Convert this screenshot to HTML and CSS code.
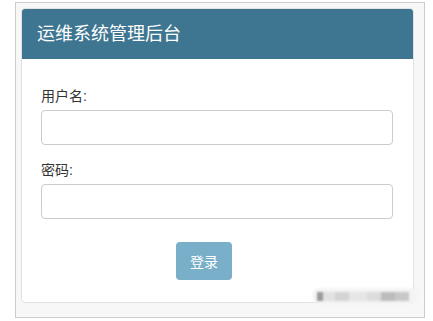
FILE: index.html
```html
<!DOCTYPE html>
<html lang="zh">
<head>
<meta charset="utf-8">
<title>运维系统管理后台</title>
<link rel="stylesheet" href="styles.css">
</head>
<body>
<div class="frame">
  <div class="card">
    <div class="card-header">运维系统管理后台</div>
    <form class="card-body">
      <label class="field-label" for="u">用户名:</label>
      <input class="field-input" id="u" type="text">
      <label class="field-label second" for="p">密码:</label>
      <input class="field-input" id="p" type="password">
      <div class="actions"><button type="button" class="btn">登录</button></div>
    </form>
  </div>
  <div class="watermark">
    <span class="wm-dot"></span><span class="wm-block b1"></span><span class="wm-block b2"></span><span class="wm-block b3"></span><span class="wm-block b4"></span><span class="wm-block b5"></span><span class="wm-block b6"></span>
  </div>
</div>
</body>
</html>
```
FILE: styles.css
```css
html, body {
  margin: 0;
  padding: 0;
  background: #ffffff;
  font-family: "Liberation Sans", "Noto Sans CJK SC", sans-serif;
}
.frame {
  position: relative;
  box-sizing: border-box;
  margin: 2px 0 0 15px;
  width: 410px;
  height: 316px;
  border: 1px solid #cccccc;
  background: #f7f7f7;
  padding: 5px 0 0 5px;
}
.card {
  box-sizing: border-box;
  width: 393px;
  height: 295px;
  background: #ffffff;
  border: 1px solid #e2e2e2;
  border-radius: 4px;
  overflow: hidden;
}
.card-header {
  height: 50px;
  box-sizing: border-box;
  background: #3e7691;
  color: #ffffff;
  font-size: 18px;
  line-height: 50px;
  padding-left: 15px;
}
.card-body {
  display: flex;
  flex-direction: column;
  padding: 27px 19px 0 19px;
  margin: 0;
}
.field-label {
  font-size: 14px;
  line-height: 20px;
  color: #333333;
  margin-bottom: 4px;
}
.field-label.second {
  margin-top: 15px;
}
.field-input {
  box-sizing: border-box;
  width: 352px;
  height: 35px;
  margin: 0;
  border: 1px solid #cccccc;
  border-radius: 4px;
  background: #ffffff;
}
.actions {
  display: flex;
  padding-top: 23px;
}
.btn {
  margin-left: 135px;
  width: 56px;
  height: 38px;
  border: none;
  border-radius: 4px;
  background: #79afc9;
  color: #ffffff;
  font-family: "Liberation Sans", "Noto Sans CJK SC", sans-serif;
  font-size: 14px;
  padding: 0;
}
.watermark {
  position: absolute;
  left: 296px;
  top: 285px;
  width: 106px;
  height: 16px;
  display: flex;
  align-items: center;
  filter: blur(1px);
  background: #f4f4f4;
  border-radius: 8px;
}
.wm-dot {
  width: 6px;
  height: 9px;
  background: #9a9a9a;
  margin-left: 5px;
}
.wm-block {
  height: 9px;
  background: #dadada;
}
.b1 { width: 12px; background: #e2e2e2; }
.b2 { width: 14px; background: #d4d4d4; }
.b3 { width: 18px; background: #e6e6e6; }
.b4 { width: 14px; background: #dcdcdc; }
.b5 { width: 14px; background: #bcbcbc; }
.b6 { width: 14px; background: #c8c8c8; }
```
